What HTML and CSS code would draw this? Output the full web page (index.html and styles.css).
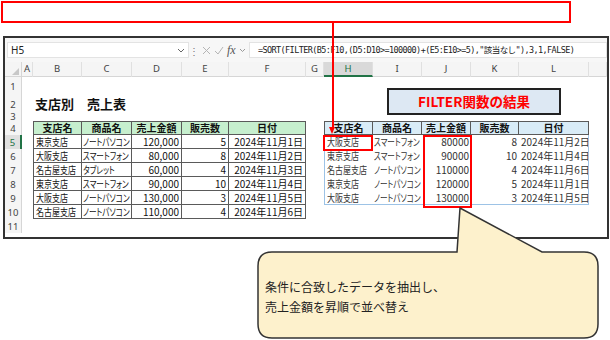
FILE: index.html
```html
<!DOCTYPE html>
<html>
    <head>
        <meta charset="UTF-8" />
        <title>FILTER関数の結果</title>
        <link rel="stylesheet" href="styles.css">
    </head>
    <body>
        <div class="topbox"></div>
        <div class="window">
            <div class="fbar">
                <div class="namebox">
                    <span>H5</span>
                    <svg width="8" height="5" viewBox="0 0 8 5"><path d="M1 1l3 3 3-3" fill="none" stroke="#666" stroke-width="1"/></svg>
                </div>
                <span class="dots">⋮</span>
                <div class="tools">
                    <svg width="9" height="9" viewBox="0 0 9 9"><path d="M1 1l7 7M8 1l-7 7" stroke="#b5b5b5" stroke-width="1"/></svg>
                    <svg width="10" height="9" viewBox="0 0 10 9"><path d="M1 5l3 3 5-7" fill="none" stroke="#b5b5b5" stroke-width="1"/></svg>
                    <span class="fx">fx</span>
                    <svg width="7" height="5" viewBox="0 0 7 5"><path d="M1 1l2.5 2.5 2.5-2.5" fill="none" stroke="#999" stroke-width="1"/></svg>
                </div>
                <div class="formula">=SORT(FILTER(B5:F10,(D5:D10&gt;=100000)+(E5:E10&gt;=5),"該当なし"),3,1,FALSE)</div>
            </div>
            <div class="sheet">
                <div class="r hdr">
                    <div class="corner"></div>
                    <div class="ch">A</div><div class="ch">B</div><div class="ch">C</div><div class="ch">D</div>
                    <div class="ch">E</div><div class="ch">F</div><div class="ch">G</div><div class="ch sel">H</div>
                    <div class="ch">I</div><div class="ch">J</div><div class="ch">K</div><div class="ch">L</div><div class="ch"></div>
                </div>
                <div class="r h18"><div class="rh">1</div></div>
                <div class="r h18"><div class="rh">2</div><div></div><div class="title">支店別　売上表</div></div>
                <div class="r h8"><div class="rh">3</div></div>
                <div class="r">
                    <div class="rh">4</div><div></div>
                    <div class="c g first">支店名</div><div class="c g">商品名</div><div class="c g">売上金額</div><div class="c g">販売数</div><div class="c g">日付</div>
                    <div></div>
                    <div class="c b first">支店名</div><div class="c b">商品名</div><div class="c b">売上金額</div><div class="c b">販売数</div><div class="c b">日付</div>
                </div>
                <div class="r">
                    <div class="rh sel">5</div><div></div>
                    <div class="c d first"><span>東京支店</span></div><div class="c d kana"><span>ノートパソコン</span></div><div class="c d num">120,000</div><div class="c d num">5</div><div class="c d num">2024年11月1日</div>
                    <div></div>
                    <div class="e left"><span>大阪支店</span></div><div class="e kana"><span>スマートフォン</span></div><div class="e num">80000</div><div class="e num">8</div><div class="e num right">2024年11月2日</div>
                </div>
                <div class="r">
                    <div class="rh">6</div><div></div>
                    <div class="c d first"><span>大阪支店</span></div><div class="c d kana"><span>スマートフォン</span></div><div class="c d num">80,000</div><div class="c d num">8</div><div class="c d num">2024年11月2日</div>
                    <div></div>
                    <div class="e left"><span>東京支店</span></div><div class="e kana"><span>スマートフォン</span></div><div class="e num">90000</div><div class="e num">10</div><div class="e num right">2024年11月4日</div>
                </div>
                <div class="r">
                    <div class="rh">7</div><div></div>
                    <div class="c d first"><span>名古屋支店</span></div><div class="c d kana"><span>タブレット</span></div><div class="c d num">60,000</div><div class="c d num">4</div><div class="c d num">2024年11月3日</div>
                    <div></div>
                    <div class="e left"><span>名古屋支店</span></div><div class="e kana"><span>ノートパソコン</span></div><div class="e num">110000</div><div class="e num">4</div><div class="e num right">2024年11月6日</div>
                </div>
                <div class="r">
                    <div class="rh">8</div><div></div>
                    <div class="c d first"><span>東京支店</span></div><div class="c d kana"><span>スマートフォン</span></div><div class="c d num">90,000</div><div class="c d num">10</div><div class="c d num">2024年11月4日</div>
                    <div></div>
                    <div class="e left"><span>東京支店</span></div><div class="e kana"><span>ノートパソコン</span></div><div class="e num">120000</div><div class="e num">5</div><div class="e num right">2024年11月1日</div>
                </div>
                <div class="r">
                    <div class="rh">9</div><div></div>
                    <div class="c d first"><span>大阪支店</span></div><div class="c d kana"><span>ノートパソコン</span></div><div class="c d num">130,000</div><div class="c d num">3</div><div class="c d num">2024年11月5日</div>
                    <div></div>
                    <div class="e left last"><span>大阪支店</span></div><div class="e kana last"><span>ノートパソコン</span></div><div class="e num last">130000</div><div class="e num last">3</div><div class="e num right last">2024年11月5日</div>
                </div>
                <div class="r">
                    <div class="rh">10</div><div></div>
                    <div class="c d first"><span>名古屋支店</span></div><div class="c d kana"><span>ノートパソコン</span></div><div class="c d num">110,000</div><div class="c d num">4</div><div class="c d num">2024年11月6日</div>
                </div>
                <div class="r"><div class="rh">11</div></div>
                <div class="result">FILTER関数の結果</div>
            </div>
        </div>

        <div class="pointer"></div>
        <div class="arrowhead"></div>
        <div class="mark mark-h5"></div>
        <div class="mark mark-j"></div>

        <div class="callout">
            <svg width="345" height="134" viewBox="0 0 345 134">
                <path d="M16 46H201L204 2L286 46H328Q342 46 342 60V118Q342 132 328 132H16Q2 132 2 118V60Q2 46 16 46Z"
                      fill="#fdf1cc" stroke="#333" stroke-width="1.5"/>
            </svg>
            <p>条件に合致したデータを抽出し、<br>売上金額を昇順で並べ替え</p>
        </div>
    </body>
</html>
```

FILE: styles.css
```css
body {
    margin: 0;
    width: 610px;
    height: 340px;
    overflow: hidden;
    position: relative;
    font-family: "Noto Sans CJK JP", "Noto Sans", sans-serif;
    color: #111;
    background: #fff;
}
.topbox {
    margin: 1px 0 0 1px;
    width: 570px;
    height: 22px;
    border: 2px solid #f00;
    box-sizing: border-box;
}
.window {
    margin: 13px 0 0 3px;
    width: 606px;
    height: 203px;
    border: 2px solid #333;
    box-sizing: border-box;
    background: #fff;
}

/* formula bar */
.fbar {
    display: flex;
    align-items: center;
    height: 24px;
    padding-left: 2px;
    background: #f7f7f7;
}
.namebox {
    width: 182px;
    height: 16px;
    box-sizing: border-box;
    background: #fff;
    border: 1px solid #e3e3e3;
    display: flex;
    align-items: center;
    justify-content: space-between;
    padding: 0 3px 0 3px;
    font-family: "Noto Sans", sans-serif;
    font-size: 10px;
    color: #222;
}
.dots {
    width: 10px;
    text-align: center;
    font-size: 10px;
    color: #777;
}
.tools {
    width: 48px;
    height: 16px;
    display: flex;
    align-items: center;
    gap: 3px;
    padding-left: 3px;
    box-sizing: border-box;
}
.fx {
    font-family: "Liberation Serif", serif;
    font-style: italic;
    font-size: 12px;
    color: #555;
}
.formula {
    flex: 1;
    height: 16px;
    margin: 0 0 0 2px;
    background: #fff;
    border: 1px solid #e3e3e3;
    box-sizing: border-box;
    padding-left: 8px;
    font-family: "DejaVu Sans Mono", "Noto Sans CJK JP", monospace;
    font-size: 8.5px;
    letter-spacing: -0.6px;
    line-height: 14px;
    color: #222;
    white-space: nowrap;
}

/* sheet grid */
.sheet {
    position: relative;
}
.r {
    display: grid;
    grid-template-columns: 17px 11px 49px 50px 50px 47px 77px 18px 49px 49px 49px 48px 70px 1fr;
    height: 14px;
}
.h18 { height: 18px; }
.h8 { height: 8px; overflow: hidden; }
.hdr {
    height: 15px;
    background: #f5f5f5;
    border-bottom: 1px solid #d6d6d6;
    box-sizing: border-box;
}
.corner {
    position: relative;
    border-right: 1px solid #d6d6d6;
}
.corner::after {
    content: "";
    position: absolute;
    right: 2px;
    bottom: 2px;
    border-left: 7px solid transparent;
    border-bottom: 7px solid #c8c8c8;
}
.ch {
    border-right: 1px solid #e0e0e0;
    text-align: center;
    font-family: "Noto Sans", sans-serif;
    font-size: 9.5px;
    line-height: 14px;
    color: #444;
}
.ch.sel {
    background: #d9d9d9;
    border-bottom: 2px solid #217346;
    color: #217346;
    line-height: 13px;
}
.rh {
    background: #f5f5f5;
    border-right: 1px solid #d6d6d6;
    display: flex;
    align-items: center;
    justify-content: center;
    overflow: hidden;
    font-family: "Noto Sans", sans-serif;
    font-size: 9.5px;
    color: #444;
}
.h8 .rh {
    align-items: flex-end;
    line-height: 8px;
}
.rh.sel {
    background: #e0e0e0;
    border-right: 2px solid #217346;
    color: #217346;
}
.title {
    grid-column: span 5;
    font-size: 13px;
    font-weight: bold;
    line-height: 18px;
    padding-left: 2px;
    white-space: nowrap;
}

/* cells */
.c, .e {
    font-size: 10px;
    line-height: 13px;
    padding: 0 2px;
    white-space: nowrap;
    overflow: hidden;
    font-feature-settings: "palt";
}
.c span, .e span {
    display: inline-block;
    transform: scaleX(0.8);
    transform-origin: 0 50%;
}
.kana { padding-left: 1px; }
.c.kana span, .e.kana span {
    transform: scaleX(0.76);
}
.c {
    border-right: 1px solid #5a5a5a;
    border-bottom: 1px solid #5a5a5a;
}
.first { border-left: 1px solid #5a5a5a; }
.g, .b {
    border-top: 1px solid #5a5a5a;
    font-weight: bold;
    text-align: center;
    line-height: 12px;
}
.g { background: #c6efce; }
.b { background: #d9ecf7; }
.num { text-align: right; }
.e { color: #333; }
.left { border-left: 1px solid #9dc3e6; }
.right { border-right: 1px solid #9dc3e6; }
.last { border-bottom: 1px solid #9dc3e6; }

.result {
    position: absolute;
    left: 382px;
    top: 26px;
    width: 174px;
    height: 27px;
    box-sizing: border-box;
    border: 2px solid #222;
    background: #dde8f3;
    color: #f00;
    font-size: 13.5px;
    font-weight: bold;
    text-align: center;
    line-height: 23px;
}

/* annotations */
.pointer {
    position: absolute;
    left: 332px;
    top: 23px;
    width: 1.5px;
    height: 105px;
    background: #f00;
}
.arrowhead {
    position: absolute;
    left: 329px;
    top: 127px;
    border-left: 3.5px solid transparent;
    border-right: 3.5px solid transparent;
    border-top: 7px solid #f00;
}
.mark {
    position: absolute;
    border: 2px solid #f00;
    box-sizing: border-box;
}
.mark-h5 {
    left: 323px;
    top: 135px;
    width: 50px;
    height: 16px;
}
.mark-j {
    left: 423px;
    top: 135px;
    width: 49px;
    height: 73px;
}
.callout {
    position: absolute;
    left: 256px;
    top: 206px;
    width: 345px;
    height: 134px;
}
.callout svg {
    position: absolute;
    left: 0;
    top: 0;
}
.callout p {
    position: relative;
    margin: 0;
    padding: 71px 0 0 9px;
    font-size: 12px;
    line-height: 20px;
    color: #222;
}
```
